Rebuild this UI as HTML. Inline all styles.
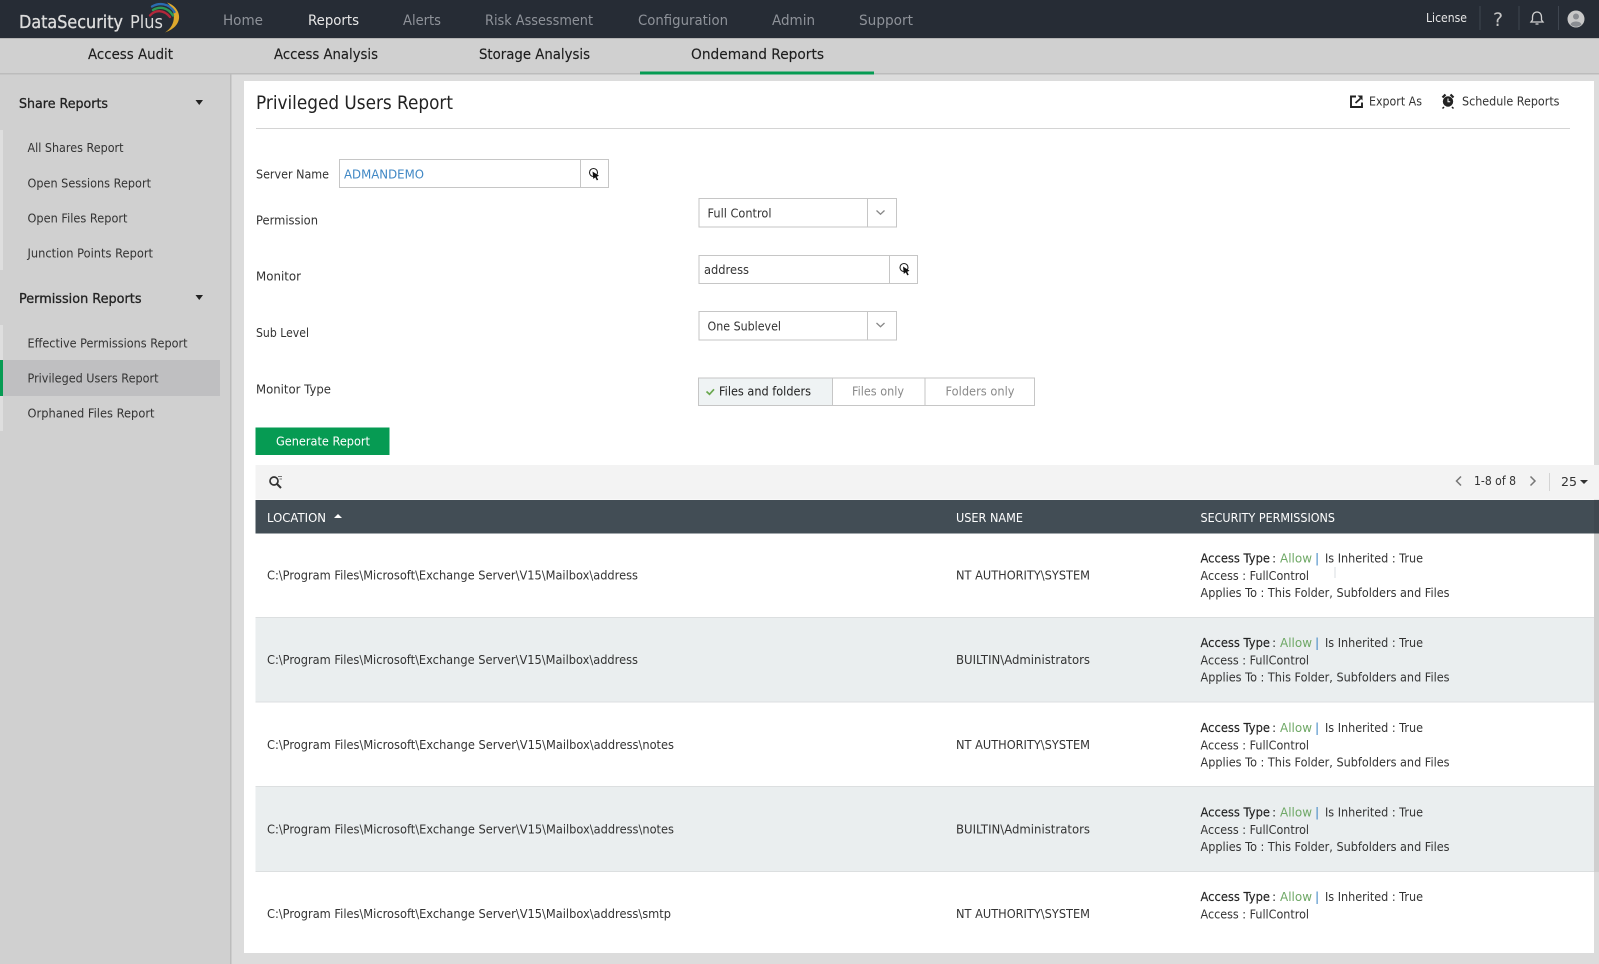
<!DOCTYPE html>
<html><head><meta charset="utf-8"><title>Privileged Users Report</title>
<style>
html,body{margin:0;padding:0;width:1599px;height:964px;overflow:hidden;background:#dcdcdc}
svg{display:block}
text{font-family:"DejaVu Sans",sans-serif;font-size:12.5px;fill:#333;white-space:pre}
.n{font-size:14.5px;fill:#8e9299}
.s{font-size:14.5px;fill:#1e1e1e;stroke:#1e1e1e;stroke-width:.15px}
.h{font-size:13.5px;fill:#222;stroke:#222;stroke-width:.3px}
.w{fill:#fff}
.g{fill:#8a8a8a}
.b{fill:#222}
.t{fill:#222;stroke:#222;stroke-width:.15px}
</style></head><body>
<svg width="1599" height="964" viewBox="0 0 1599 964" xmlns="http://www.w3.org/2000/svg">
<g style="filter:blur(.25px)">
<rect width="1599" height="964" fill="#dcdcdc"/>
<!-- top bar -->
<rect width="1599" height="38" fill="#262c35"/>
<rect y="38" width="1599" height="1" fill="#b5b5b5"/>
<text x="19" y="28" style="font-size:18px;fill:#dcdcdc;stroke:#dcdcdc;stroke-width:.35px" textLength="104" lengthAdjust="spacingAndGlyphs">DataSecurity</text>
<text x="130" y="28" style="font-size:18px;fill:#dcdcdc" textLength="33" lengthAdjust="spacingAndGlyphs">Plus</text>
<path d="M167 2.500C181 7 186 25 165 32.500C177 25 176 10 167 2.500z" fill="#dfa92c"/>
<g fill="none" stroke-linecap="round">
<path d="M152 6.500C159 2.500 169 3 174.500 12" stroke="#2b6cb0" stroke-width="2.400"/>
<path d="M153 10C160 6 168 7.500 173 15.500" stroke="#2c9a55" stroke-width="2.400"/>
<path d="M150 15.500C155 9.500 164 9.500 170 17" stroke="#b3283a" stroke-width="2.400"/>
</g>
<text class="n" x="223" y="25" textLength="40" lengthAdjust="spacingAndGlyphs">Home</text>
<text class="n" x="308" y="25" textLength="51" lengthAdjust="spacingAndGlyphs" style="fill:#e8e8e8">Reports</text>
<text class="n" x="403" y="25" textLength="38" lengthAdjust="spacingAndGlyphs">Alerts</text>
<text class="n" x="485" y="25" textLength="108" lengthAdjust="spacingAndGlyphs">Risk Assessment</text>
<text class="n" x="638" y="25" textLength="90" lengthAdjust="spacingAndGlyphs">Configuration</text>
<text class="n" x="772" y="25" textLength="43" lengthAdjust="spacingAndGlyphs">Admin</text>
<text class="n" x="859" y="25" textLength="54" lengthAdjust="spacingAndGlyphs">Support</text>
<text x="1426" y="22" textLength="41" lengthAdjust="spacingAndGlyphs" style="fill:#e6e6e6">License</text>
<rect x="1479.500" y="6" width="1" height="24" fill="#3f4650"/><rect x="1518.500" y="6" width="1" height="24" fill="#3f4650"/><rect x="1558" y="6" width="1" height="24" fill="#3f4650"/>
<text x="1493" y="26" style="font-size:19px;fill:#c4c4c4">?</text>
<path d="M1537 12c-3 0-4.500 2.400-4.500 5v3l-1.500 2h12l-1.500-2v-3c0-2.600-1.500-5-4.500-5z" fill="none" stroke="#d0d0d0" stroke-width="1.300"/><path d="M1535.500 24h3" stroke="#d0d0d0" stroke-width="1.300"/>
<circle cx="1576" cy="19" r="8.500" fill="#c8c8c8"/><circle cx="1576" cy="16.500" r="3" fill="#8a8d92"/><path d="M1570.500 24.500c1-4 10-4 11 0a8 8 0 0 1-11 0z" fill="#8a8d92"/>
<!-- subnav -->
<rect y="39" width="1599" height="34" fill="#d0d0d0"/>
<rect y="73" width="1599" height="1.500" fill="#bcbcbc"/>
<text class="s" x="88" y="59" textLength="85" lengthAdjust="spacingAndGlyphs">Access Audit</text>
<text class="s" x="274" y="59" textLength="104" lengthAdjust="spacingAndGlyphs">Access Analysis</text>
<text class="s" x="479" y="59" textLength="111" lengthAdjust="spacingAndGlyphs">Storage Analysis</text>
<text class="s" x="691" y="59" textLength="133" lengthAdjust="spacingAndGlyphs">Ondemand Reports</text>
<rect x="640" y="71.500" width="234" height="3" fill="#069b53"/>
<!-- sidebar -->
<rect y="74.500" width="230" height="890" fill="#d0d0d0"/>
<rect x="230" y="74.500" width="1.500" height="890" fill="#bcbcbc"/>
<rect y="130" width="3" height="140" fill="#dedede"/><rect y="325" width="3" height="106" fill="#dedede"/>
<text class="h" x="19" y="108" textLength="89" lengthAdjust="spacingAndGlyphs">Share Reports</text>
<path d="M195.500 100h7.500l-3.750 5z" fill="#222"/>
<text x="27.500" y="152" textLength="96" lengthAdjust="spacingAndGlyphs">All Shares Report</text>
<text x="27.500" y="187.500" textLength="123.500" lengthAdjust="spacingAndGlyphs">Open Sessions Report</text>
<text x="27.500" y="222.500" textLength="100" lengthAdjust="spacingAndGlyphs">Open Files Report</text>
<text x="27.500" y="257.500" textLength="125.500" lengthAdjust="spacingAndGlyphs">Junction Points Report</text>
<text class="h" x="19" y="303" textLength="122.500" lengthAdjust="spacingAndGlyphs">Permission Reports</text>
<path d="M195.500 295h7.500l-3.750 5z" fill="#222"/>
<text x="27.500" y="347.500" textLength="160" lengthAdjust="spacingAndGlyphs">Effective Permissions Report</text>
<rect x="3" y="360" width="217" height="36" fill="#bfbfc1"/><rect y="360" width="3" height="36" fill="#069b53"/>
<text x="27.500" y="382.500" textLength="131" lengthAdjust="spacingAndGlyphs">Privileged Users Report</text>
<text x="27.500" y="417.500" textLength="127" lengthAdjust="spacingAndGlyphs">Orphaned Files Report</text>
<!-- panel -->
<rect x="244" y="81" width="1350" height="872" fill="#fff"/>
<text x="256" y="109" textLength="197" lengthAdjust="spacingAndGlyphs" style="font-size:19px;fill:#222">Privileged Users Report</text>
<rect x="256" y="128" width="1314" height="1" fill="#d4d4d4"/>
<path d="M1356 96.500h-5v10.500h11v-4.500" fill="none" stroke="#222" stroke-width="1.900"/><path d="M1355.500 103l5-4.500" stroke="#222" stroke-width="1.800"/><path d="M1357.500 95.500h5v5z" fill="#222"/>
<text x="1369" y="105.500" textLength="53" lengthAdjust="spacingAndGlyphs">Export As</text>
<circle cx="1448" cy="101.500" r="5.200" fill="#222"/><path d="M1442.500 97.500l3-3M1453.500 97.500l-3-3" stroke="#222" stroke-width="2.200"/><path d="M1444 107l-1.500 1.500M1452 107l1.500 1.500" stroke="#222" stroke-width="1.500"/><path d="M1448 98.500v3.200h2.200" stroke="#fff" stroke-width="1" fill="none"/>
<text x="1462" y="105.500" textLength="97.500" lengthAdjust="spacingAndGlyphs">Schedule Reports</text>
<!-- form -->
<text x="256" y="178.500" textLength="73" lengthAdjust="spacingAndGlyphs">Server Name</text>
<rect x="339.500" y="159.500" width="269" height="28" fill="#fff" stroke="#c6c6c6"/><rect x="580" y="160" width="1" height="28" fill="#c6c6c6"/>
<text x="344" y="178.500" textLength="80" lengthAdjust="spacingAndGlyphs" style="fill:#3f87c4">ADMANDEMO</text>
<circle cx="593.500" cy="172.500" r="4" fill="none" stroke="#222" stroke-width="1.100"/><path d="M592.500 171.500l6.500 4.300-2.300.9 1.500 3-1.400.7-1.500-3-2 1.500z" fill="#111"/>
<text x="256" y="224.500" textLength="62" lengthAdjust="spacingAndGlyphs">Permission</text>
<rect x="699" y="198.500" width="197.500" height="28.500" fill="#fff" stroke="#c6c6c6"/><rect x="867" y="199" width="1" height="28" fill="#c6c6c6"/>
<text x="707.500" y="217.500" textLength="64" lengthAdjust="spacingAndGlyphs">Full Control</text>
<path d="M876.500 210.500l4 3.700 4-3.700" fill="none" stroke="#888" stroke-width="1.300"/>
<text x="256" y="280.500" textLength="45" lengthAdjust="spacingAndGlyphs">Monitor</text>
<rect x="699" y="255.500" width="218.500" height="28" fill="#fff" stroke="#c6c6c6"/><rect x="889" y="256" width="1" height="28" fill="#c6c6c6"/>
<text x="704" y="274" textLength="45" lengthAdjust="spacingAndGlyphs">address</text>
<circle cx="904" cy="267.500" r="4" fill="none" stroke="#222" stroke-width="1.100"/><path d="M903 266.500l6.500 4.300-2.300.9 1.500 3-1.400.7-1.500-3-2 1.500z" fill="#111"/>
<text x="256" y="337" textLength="53" lengthAdjust="spacingAndGlyphs">Sub Level</text>
<rect x="699" y="311.500" width="197.500" height="28.500" fill="#fff" stroke="#c6c6c6"/><rect x="867" y="312" width="1" height="28" fill="#c6c6c6"/>
<text x="707.500" y="330.500" textLength="73.500" lengthAdjust="spacingAndGlyphs">One Sublevel</text>
<path d="M876.500 323l4 3.700 4-3.700" fill="none" stroke="#888" stroke-width="1.300"/>
<text x="256" y="393.500" textLength="75" lengthAdjust="spacingAndGlyphs">Monitor Type</text>
<rect x="698.500" y="378" width="336" height="27.500" fill="#fff" stroke="#c6c6c6"/>
<rect x="699" y="378.500" width="133" height="26.500" fill="#eff3f4"/>
<rect x="832" y="378" width="1" height="28" fill="#c6c6c6"/><rect x="924.500" y="378" width="1" height="28" fill="#c6c6c6"/>
<path d="M706.500 391.500l3 2.800 4.500-5" fill="none" stroke="#6aa84f" stroke-width="1.700"/>
<text x="719" y="395.500" textLength="92" lengthAdjust="spacingAndGlyphs" class="b">Files and folders</text>
<text x="852" y="395.500" textLength="52" lengthAdjust="spacingAndGlyphs" class="g">Files only</text>
<text x="945.500" y="395.500" textLength="69" lengthAdjust="spacingAndGlyphs" class="g">Folders only</text>
<rect x="255.500" y="427.500" width="134" height="27.500" fill="#069b53"/>
<text x="276" y="445.500" textLength="94" lengthAdjust="spacingAndGlyphs" class="w">Generate Report</text>
<!-- toolbar -->
<rect x="255.500" y="465" width="1343.500" height="34.500" fill="#f3f3f3"/>
<circle cx="274" cy="481" r="4" fill="none" stroke="#333" stroke-width="1.700"/><path d="M277 484l4 4" stroke="#333" stroke-width="2"/><path d="M278 476.500h4M279.500 479h2.500" stroke="#777" stroke-width=".9"/>
<path d="M1461 476.500l-4.500 4.500 4.500 4.500" fill="none" stroke="#777" stroke-width="1.500"/>
<text x="1474" y="485" textLength="42" lengthAdjust="spacingAndGlyphs">1-8 of 8</text>
<path d="M1530.500 476.500l4.500 4.500-4.500 4.500" fill="none" stroke="#777" stroke-width="1.500"/>
<rect x="1549" y="473" width="1" height="18" fill="#d4d4d4"/>
<text x="1561" y="486" textLength="16" lengthAdjust="spacingAndGlyphs">25</text>
<path d="M1580 480h8l-4 4z" fill="#333"/>
<!-- header -->
<rect x="255.500" y="500" width="1343.500" height="33.500" fill="#424d55"/>
<text x="267" y="522" textLength="59" lengthAdjust="spacingAndGlyphs" class="w">LOCATION</text>
<path d="M334 518h8l-4-4z" fill="#fff"/>
<text x="956" y="522" textLength="67" lengthAdjust="spacingAndGlyphs" class="w">USER NAME</text>
<text x="1200.500" y="522" textLength="134.500" lengthAdjust="spacingAndGlyphs" class="w">SECURITY PERMISSIONS</text>
<!-- rows -->
<rect x="255.500" y="617" width="1343.500" height="85" fill="#eaeeef"/>
<rect x="255.500" y="786.300" width="1343.500" height="85.200" fill="#eaeeef"/>
<rect x="255.500" y="617" width="1343.500" height="1" fill="#dcdfe0"/><rect x="255.500" y="701.500" width="1343.500" height="1" fill="#dcdfe0"/><rect x="255.500" y="786" width="1343.500" height="1" fill="#dcdfe0"/><rect x="255.500" y="871" width="1343.500" height="1" fill="#dcdfe0"/>
<rect x="1334.500" y="567" width="1" height="11" fill="#d8dde0"/>

<text x="267" y="579.500" textLength="371" lengthAdjust="spacingAndGlyphs">C:\Program Files\Microsoft\Exchange Server\V15\Mailbox\address</text>
<text x="956" y="579.500" textLength="134" lengthAdjust="spacingAndGlyphs">NT AUTHORITY\SYSTEM</text>
<text x="1200.500" y="562.500" textLength="69.500" lengthAdjust="spacingAndGlyphs" class="t">Access Type</text><text x="1272" y="562.500">:</text><text x="1280" y="562.500" textLength="32" lengthAdjust="spacingAndGlyphs" style="fill:#6fa866">Allow</text><text x="1315" y="562.500" style="fill:#3f87c4">|</text><text x="1325" y="562.500" textLength="98" lengthAdjust="spacingAndGlyphs">Is Inherited : True</text>
<text x="1200.500" y="580" textLength="108.500" lengthAdjust="spacingAndGlyphs">Access : FullControl</text>
<text x="1200.500" y="597" textLength="249" lengthAdjust="spacingAndGlyphs">Applies To : This Folder, Subfolders and Files</text>

<text x="267" y="664" textLength="371" lengthAdjust="spacingAndGlyphs">C:\Program Files\Microsoft\Exchange Server\V15\Mailbox\address</text>
<text x="956" y="664" textLength="134" lengthAdjust="spacingAndGlyphs">BUILTIN\Administrators</text>
<text x="1200.500" y="647" textLength="69.500" lengthAdjust="spacingAndGlyphs" class="t">Access Type</text><text x="1272" y="647">:</text><text x="1280" y="647" textLength="32" lengthAdjust="spacingAndGlyphs" style="fill:#6fa866">Allow</text><text x="1315" y="647" style="fill:#3f87c4">|</text><text x="1325" y="647" textLength="98" lengthAdjust="spacingAndGlyphs">Is Inherited : True</text>
<text x="1200.500" y="664.500" textLength="108.500" lengthAdjust="spacingAndGlyphs">Access : FullControl</text>
<text x="1200.500" y="681.500" textLength="249" lengthAdjust="spacingAndGlyphs">Applies To : This Folder, Subfolders and Files</text>

<text x="267" y="748.800" textLength="407" lengthAdjust="spacingAndGlyphs">C:\Program Files\Microsoft\Exchange Server\V15\Mailbox\address\notes</text>
<text x="956" y="748.800" textLength="134" lengthAdjust="spacingAndGlyphs">NT AUTHORITY\SYSTEM</text>
<text x="1200.500" y="731.800" textLength="69.500" lengthAdjust="spacingAndGlyphs" class="t">Access Type</text><text x="1272" y="731.800">:</text><text x="1280" y="731.800" textLength="32" lengthAdjust="spacingAndGlyphs" style="fill:#6fa866">Allow</text><text x="1315" y="731.800" style="fill:#3f87c4">|</text><text x="1325" y="731.800" textLength="98" lengthAdjust="spacingAndGlyphs">Is Inherited : True</text>
<text x="1200.500" y="749.300" textLength="108.500" lengthAdjust="spacingAndGlyphs">Access : FullControl</text>
<text x="1200.500" y="766.300" textLength="249" lengthAdjust="spacingAndGlyphs">Applies To : This Folder, Subfolders and Files</text>

<text x="267" y="833.500" textLength="407" lengthAdjust="spacingAndGlyphs">C:\Program Files\Microsoft\Exchange Server\V15\Mailbox\address\notes</text>
<text x="956" y="833.500" textLength="134" lengthAdjust="spacingAndGlyphs">BUILTIN\Administrators</text>
<text x="1200.500" y="816.500" textLength="69.500" lengthAdjust="spacingAndGlyphs" class="t">Access Type</text><text x="1272" y="816.500">:</text><text x="1280" y="816.500" textLength="32" lengthAdjust="spacingAndGlyphs" style="fill:#6fa866">Allow</text><text x="1315" y="816.500" style="fill:#3f87c4">|</text><text x="1325" y="816.500" textLength="98" lengthAdjust="spacingAndGlyphs">Is Inherited : True</text>
<text x="1200.500" y="834" textLength="108.500" lengthAdjust="spacingAndGlyphs">Access : FullControl</text>
<text x="1200.500" y="851" textLength="249" lengthAdjust="spacingAndGlyphs">Applies To : This Folder, Subfolders and Files</text>

<text x="267" y="918" textLength="404" lengthAdjust="spacingAndGlyphs">C:\Program Files\Microsoft\Exchange Server\V15\Mailbox\address\smtp</text>
<text x="956" y="918" textLength="134" lengthAdjust="spacingAndGlyphs">NT AUTHORITY\SYSTEM</text>
<text x="1200.500" y="901" textLength="69.500" lengthAdjust="spacingAndGlyphs" class="t">Access Type</text><text x="1272" y="901">:</text><text x="1280" y="901" textLength="32" lengthAdjust="spacingAndGlyphs" style="fill:#6fa866">Allow</text><text x="1315" y="901" style="fill:#3f87c4">|</text><text x="1325" y="901" textLength="98" lengthAdjust="spacingAndGlyphs">Is Inherited : True</text>
<text x="1200.500" y="918.500" textLength="108.500" lengthAdjust="spacingAndGlyphs">Access : FullControl</text>

<!-- scrollbar -->
<rect x="1594" y="500" width="5" height="33.500" fill="#000" opacity=".06"/>
<rect x="1594" y="533.500" width="5" height="338.500" fill="#cfcfcf"/>
<rect x="1594" y="872" width="5" height="92" fill="#dcdcdc"/>
</g>
</svg>
</body></html>
